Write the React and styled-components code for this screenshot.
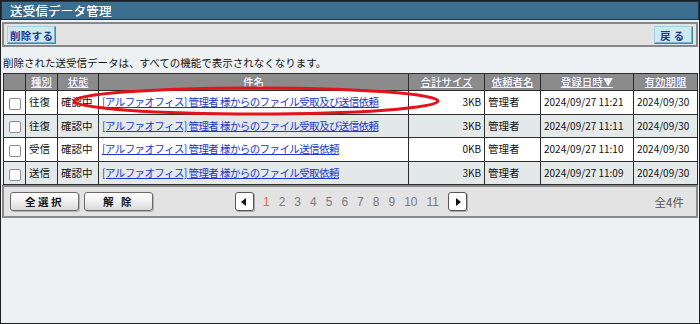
import styled, { createGlobalStyle } from "styled-components";

const GlobalStyle = createGlobalStyle`
  html, body {
    margin: 0;
    padding: 0;
    background: #ffffff;
  }
  * {
    box-sizing: border-box;
  }
`;

const JP = `"Noto Sans CJK JP", "Liberation Sans", sans-serif`;

const rows = [
  { kind: "往復", status: "確認中", title: "[アルファオフィス] 管理者 様からのファイル受取及び送信依頼", size: "3KB", owner: "管理者", date: "2024/09/27 11:21", limit: "2024/09/30" },
  { kind: "往復", status: "確認中", title: "[アルファオフィス] 管理者 様からのファイル受取及び送信依頼", size: "3KB", owner: "管理者", date: "2024/09/27 11:11", limit: "2024/09/30" },
  { kind: "受信", status: "確認中", title: "[アルファオフィス] 管理者 様からのファイル送信依頼", size: "0KB", owner: "管理者", date: "2024/09/27 11:10", limit: "2024/09/30" },
  { kind: "送信", status: "確認中", title: "[アルファオフィス] 管理者 様からのファイル受取依頼", size: "3KB", owner: "管理者", date: "2024/09/27 11:09", limit: "2024/09/30" },
];

const pages = [1, 2, 3, 4, 5, 6, 7, 8, 9, 10, 11];

const App = () => {
  return (
    <>
      <GlobalStyle />
      <Frame>
        <TitleBar>送受信データ管理</TitleBar>

        <Toolbar>
          <ActionButton>削除する</ActionButton>
          <ActionButton $wide>戻る</ActionButton>
        </Toolbar>

        <Notice>削除された送受信データは、すべての機能で表示されなくなります。</Notice>

        <Table>
          <colgroup>
            <col style={{ width: 22 }} />
            <col style={{ width: 32 }} />
            <col style={{ width: 41 }} />
            <col style={{ width: 310 }} />
            <col style={{ width: 76 }} />
            <col style={{ width: 56 }} />
            <col style={{ width: 93 }} />
            <col style={{ width: 64 }} />
          </colgroup>
          <thead>
            <tr>
              <Th></Th>
              <Th $sort>種別</Th>
              <Th $sort>状態</Th>
              <Th>件名</Th>
              <Th $sort>合計サイズ</Th>
              <Th $sort>依頼者名</Th>
              <Th $sort>登録日時▼</Th>
              <Th $sort>有効期限</Th>
            </tr>
          </thead>
          <tbody>
            {rows.map((r, i) => (
              <Row key={i} $alt={i % 2 === 1}>
                <Td $center>
                  <Check />
                </Td>
                <Td>{r.kind}</Td>
                <Td>{r.status}</Td>
                <Td>
                  <TitleLink href="#">{r.title}</TitleLink>
                </Td>
                <Td $right $num>{r.size}</Td>
                <Td>{r.owner}</Td>
                <Td $num>{r.date}</Td>
                <Td $num>{r.limit}</Td>
              </Row>
            ))}
          </tbody>
        </Table>

        <BottomBar>
          <ButtonGroup>
            <GrayButton>全選択</GrayButton>
            <GrayButton>解 除</GrayButton>
          </ButtonGroup>
          <Pager>
            <ArrowBox>
              <svg width="6" height="8" viewBox="0 0 6 8">
                <path d="M5 0 L0 4 L5 8 Z" fill="#111" />
              </svg>
            </ArrowBox>
            {pages.map((p) => (
              <PageNum key={p} $current={p === 1}>{p}</PageNum>
            ))}
            <ArrowBox>
              <svg width="6" height="8" viewBox="0 0 6 8">
                <path d="M1 0 L6 4 L1 8 Z" fill="#111" />
              </svg>
            </ArrowBox>
          </Pager>
          <Count>全4件</Count>
        </BottomBar>

        <Marker width="700" height="324" viewBox="0 0 700 324">
          <ellipse cx="256" cy="101" rx="182" ry="13" fill="none" stroke="#e3121b" strokeWidth="3" />
        </Marker>
      </Frame>
    </>
  );
};

const Frame = styled.div`
  position: relative;
  width: 700px;
  height: 324px;
  border: 1px solid #1e1e1e;
  background: #edf1f4;
  font-family: ${JP};
  font-size: 10.5px;
  color: #111;
  overflow: hidden;
`;

const TitleBar = styled.div`
  height: 19px;
  padding-left: 8px;
  background: #3b6e8e;
  border: 1px solid #1c3547;
  color: #ffffff;
  font-size: 12.5px;
  line-height: 17px;
  letter-spacing: 0.2px;
  text-shadow: 0 0 0.5px #ffffff;
`;

const Toolbar = styled.div`
  display: flex;
  justify-content: space-between;
  align-items: center;
  height: 25px;
  margin: 2px 1px 0;
  padding: 1px 3px 0 3px;
  background: #e3e3e3;
  border: 2px solid #878787;
`;

const ActionButton = styled.button`
  height: 18px;
  padding: ${(p) => (p.$wide ? "0 5px" : "0 2px")};
  background: #cfe9f1;
  border: 1px solid #3e8ea6;
  border-top-color: #9fd2e2;
  border-left-color: #9fd2e2;
  box-shadow: inset -1px -1px 0 #6fb2c6;
  color: #1f3690;
  font-family: ${JP};
  font-size: 10.5px;
  font-weight: bold;
  line-height: 15px;
  letter-spacing: ${(p) => (p.$wide ? "3px" : "0.3px")};
  cursor: pointer;
`;

const Notice = styled.div`
  height: 26px;
  padding: 9px 2px 0;
  font-size: 10.5px;
  line-height: 14px;
`;

const Table = styled.table`
  width: 694px;
  margin-left: 2px;
  border-collapse: collapse;
  table-layout: fixed;
  border: 1px solid #2c2c2c;
`;

const Th = styled.th`
  height: 17px;
  padding: 0;
  background: #8b8b8b;
  border: 1px solid #2c2c2c;
  color: #f3f3ff;
  font-size: 10.5px;
  font-weight: bold;
  line-height: 14px;
  text-align: center;
  text-decoration: ${(p) => (p.$sort ? "underline" : "none")};
  text-shadow: 0 0 1px #3a3a55;
`;

const Row = styled.tr`
  background: ${(p) => (p.$alt ? "#e3e8e8" : "#ffffff")};
`;

const Td = styled.td`
  height: 23.6px;
  padding: 0 3px;
  border: 1px solid #2c2c2c;
  font-size: ${(p) => (p.$num ? "10px" : "10.5px")};
  line-height: 14px;
  text-align: ${(p) => (p.$center ? "center" : p.$right ? "right" : "left")};
  white-space: nowrap;
  overflow: hidden;
`;

const Check = styled.span`
  display: inline-block;
  width: 12px;
  height: 12px;
  margin-top: 2px;
  vertical-align: middle;
  background: #ffffff;
  border: 1px solid #8c8c8c;
  border-radius: 2px;
`;

const TitleLink = styled.a`
  color: #2035c8;
  text-decoration: underline;
  letter-spacing: -0.6px;
`;

const BottomBar = styled.div`
  display: grid;
  grid-template-columns: 1fr auto 1fr;
  align-items: center;
  width: 696px;
  height: 33px;
  margin: 0 0 0 1px;
  padding: 0 4px 0 6px;
  background: #e3e3e3;
  border: 2px solid #8a8a8a;
`;

const ButtonGroup = styled.div`
  display: flex;
  gap: 5px;
`;

const GrayButton = styled.button`
  width: 69px;
  height: 19px;
  padding: 0;
  background: linear-gradient(#ffffff, #f2f2f2 45%, #d9d9d9);
  border: 1px solid #6a6a6a;
  border-radius: 3px;
  box-shadow: 1px 1px 0 #b5b5b5;
  color: #111;
  font-family: ${JP};
  font-size: 10.5px;
  font-weight: bold;
  letter-spacing: 2.5px;
  cursor: pointer;
`;

const Pager = styled.div`
  display: flex;
  align-items: center;
  gap: 9px;
  font-family: "Liberation Sans", Arial, sans-serif;
  font-size: 12px;
`;

const ArrowBox = styled.span`
  display: inline-flex;
  align-items: center;
  justify-content: center;
  width: 19px;
  height: 19px;
  background: #ffffff;
  border: 1px solid #555;
  border-radius: 3px;
  box-shadow: 1px 1px 0 #a8a8a8;
`;

const PageNum = styled.span`
  color: ${(p) => (p.$current ? "#f06a1e" : "#7c7c7c")};
`;

const Count = styled.div`
  justify-self: end;
  margin-right: 8px;
  color: #555;
  font-size: 11.5px;
`;

const Marker = styled.svg`
  position: absolute;
  left: -1px;
  top: -1px;
  pointer-events: none;
`;

export default App;
